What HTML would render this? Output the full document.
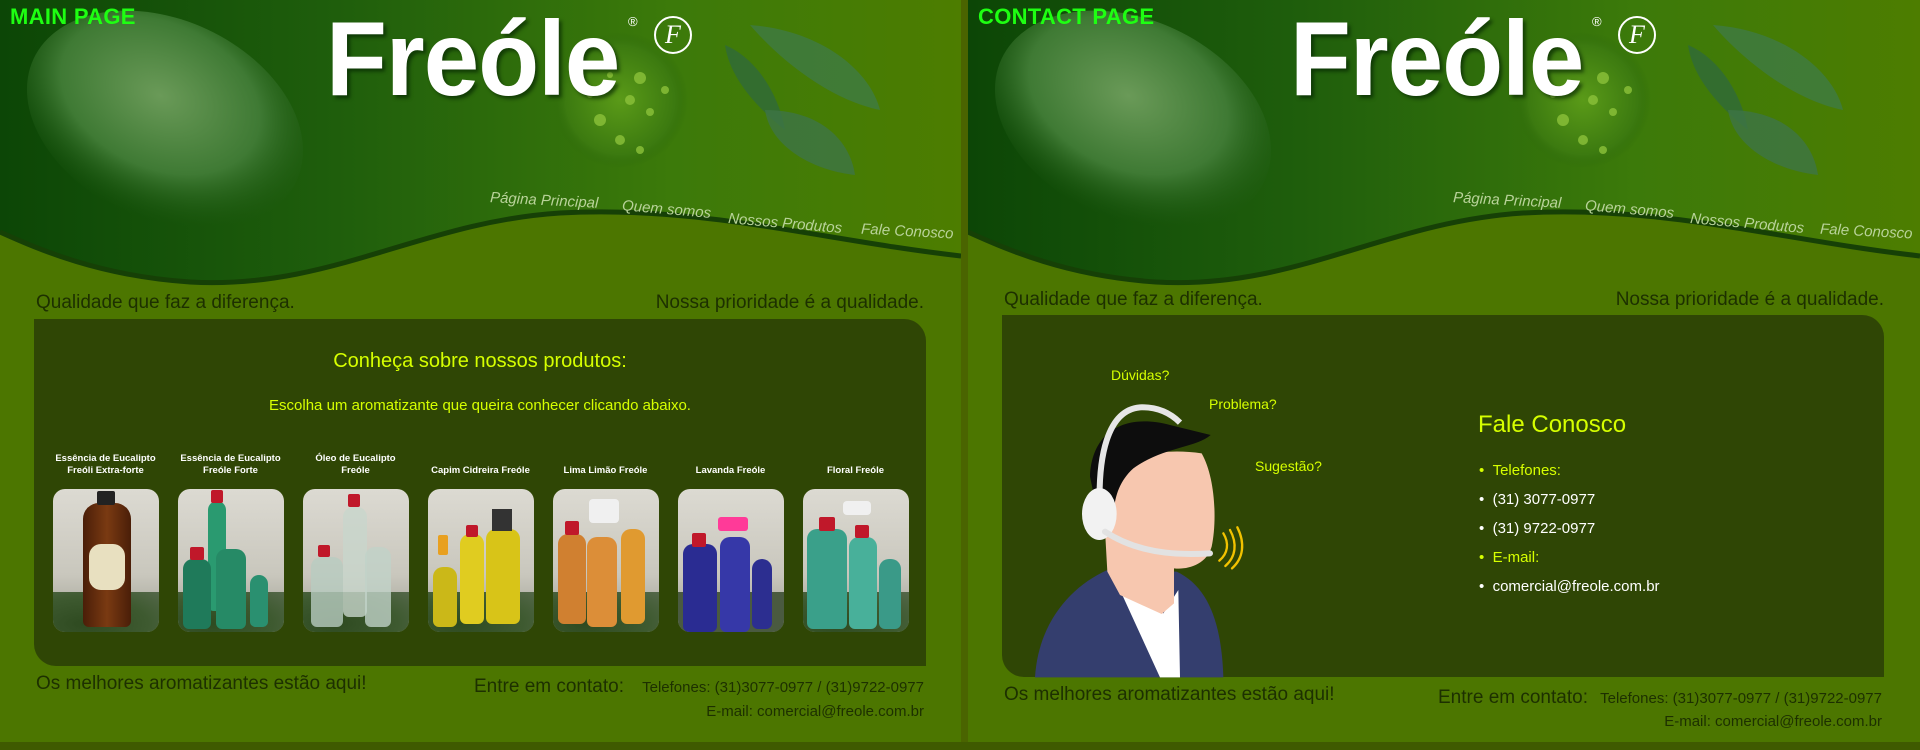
<!DOCTYPE html>
<html><head><meta charset="utf-8"><style>
*{margin:0;padding:0;box-sizing:border-box}
body{width:1920px;height:750px;background:#4f6e00;overflow:hidden;font-family:"Liberation Sans",Arial,sans-serif;position:relative}
.panel{position:absolute;top:0;height:742px;background:#4c7600;overflow:hidden}
.sep{position:absolute;left:961px;top:0;width:7px;height:750px;background:#4a6400}
.bottom{position:absolute;left:0;top:742px;width:1920px;height:8px;background:#3f5a00}
.abs{position:absolute;white-space:nowrap}
.tag{position:absolute;left:10px;top:4px;color:#1eff12;font-weight:bold;font-size:22px;letter-spacing:0.3px;z-index:5}
.logo{position:absolute;left:326px;top:-1px;color:#fff;font-weight:bold;font-size:106px;transform:scaleX(0.94);transform-origin:left top;text-shadow:3px 3px 4px rgba(0,30,0,.6);letter-spacing:-1px;z-index:4}
.reg{position:absolute;left:628px;top:14px;color:#fff;font-size:13px;z-index:4}
.fc{position:absolute;left:654px;top:16px;width:38px;height:38px;border:2px solid #fff;border-radius:50%;color:#fff;font-family:"Liberation Serif",serif;font-style:italic;font-size:26px;text-align:center;line-height:34px;z-index:4}
.nav{position:absolute;color:#b9d39a;font-style:italic;font-size:15px;z-index:4;white-space:nowrap}
.dark{color:#1d3000}
.box{position:absolute;background:#2f4605;border-radius:0 22px 0 22px}
.lbl{position:absolute;width:125px;text-align:center;color:#fff;font-weight:bold;font-size:9.5px;line-height:12px}
.img{position:absolute;width:106px;height:143px;border-radius:12px;overflow:hidden;background:linear-gradient(#dcdad2,#c9c7bd 60%,#9a9c90)}
.leaf{position:absolute;left:0;bottom:0;width:106px;height:40px;background:radial-gradient(ellipse at 30% 80%,#2e4a20,#3e5a30 60%,#55684a)}
.b{position:absolute;border-radius:10px 10px 6px 6px}
.cap{position:absolute;background:#c0182a;border-radius:2px}
.y{color:#d6ff00}
ul{list-style:none}
</style></head><body>

<!-- LEFT PANEL -->
<div class="panel" style="left:0;width:961px">
  <svg class="abs" style="left:0;top:0" width="961" height="300">
    <defs>
      <linearGradient id="hg" x1="0" x2="1" y1="0" y2="0">
        <stop offset="0" stop-color="#0c4606"/><stop offset="0.35" stop-color="#1f5e0c"/><stop offset="0.7" stop-color="#3c7a0a"/><stop offset="1" stop-color="#4d7d00"/>
      </linearGradient>
      <radialGradient id="lf" cx="0.45" cy="0.4" r="0.6"><stop offset="0" stop-color="#6a9a58"/><stop offset="0.6" stop-color="#3f7a34"/><stop offset="1" stop-color="#1f5a14" stop-opacity="0"/></radialGradient>
      <radialGradient id="dr" cx="0.5" cy="0.5" r="0.5"><stop offset="0" stop-color="#5a9a18"/><stop offset="0.8" stop-color="#3c7a10"/><stop offset="1" stop-color="#2e6a0a" stop-opacity="0"/></radialGradient>
    </defs>
    <path d="M0 0H961V256C820 240 700 205 560 213C420 222 330 290 190 282C100 276 40 250 0 232Z" fill="url(#hg)"/>
    <ellipse cx="165" cy="120" rx="145" ry="100" fill="url(#lf)" transform="rotate(25 165 120)"/>
    <circle cx="620" cy="100" r="68" fill="url(#dr)"/>
    <g fill="#8cc23a" opacity=".8"><circle cx="640" cy="78" r="6"/><circle cx="630" cy="100" r="5"/><circle cx="600" cy="120" r="6"/><circle cx="650" cy="112" r="4"/><circle cx="620" cy="140" r="5"/><circle cx="590" cy="95" r="3"/><circle cx="665" cy="90" r="4"/><circle cx="610" cy="75" r="3"/><circle cx="640" cy="150" r="4"/></g>
    <path d="M750 25C820 30 870 70 880 110C830 100 780 60 750 25Z" fill="#3f7a44" opacity=".8"/>
    <path d="M725 45C760 60 780 100 785 130C760 110 730 80 725 45Z" fill="#2f6a3a" opacity=".8"/>
    <path d="M765 110C820 110 850 140 855 175C810 170 770 145 765 110Z" fill="#3d7446" opacity=".8"/>
    <path d="M0 232C40 250 100 276 190 282C330 290 420 222 560 213C700 205 820 240 961 256" fill="none" stroke="#164006" stroke-width="5"/>
  </svg>
  <div class="tag">MAIN PAGE</div>
  <div class="logo">Freóle</div>
  <div class="reg">®</div>
  <div class="fc">F</div>
  <div class="nav" style="left:490px;top:192px;transform:rotate(3deg)">Página Principal</div>
  <div class="nav" style="left:622px;top:201px;transform:rotate(5deg)">Quem somos</div>
  <div class="nav" style="left:728px;top:215px;transform:rotate(5deg)">Nossos Produtos</div>
  <div class="nav" style="left:861px;top:223px;transform:rotate(3deg)">Fale Conosco</div>

  <div class="abs dark" style="left:36px;top:292px;font-size:19px">Qualidade que faz a diferença.</div>
  <div class="abs dark" style="right:37px;top:292px;font-size:19px">Nossa prioridade é a qualidade.</div>

  <div class="box" style="left:34px;top:319px;width:892px;height:347px"></div>
  <div class="abs y" style="left:34px;width:892px;top:350px;text-align:center;font-size:20px">Conheça sobre nossos produtos:</div>
  <div class="abs y" style="left:34px;width:892px;top:397px;text-align:center;font-size:15px">Escolha um aromatizante que queira conhecer clicando abaixo.</div>

  <div class="lbl" style="left:43px;top:453px">Essência de Eucalipto<br>Freóli Extra-forte</div>
  <div class="lbl" style="left:168px;top:453px">Essência de Eucalipto<br>Freóle Forte</div>
  <div class="lbl" style="left:293px;top:453px">Óleo de Eucalipto<br>Freóle</div>
  <div class="lbl" style="left:418px;top:465px">Capim Cidreira Freóle</div>
  <div class="lbl" style="left:543px;top:465px">Lima Limão Freóle</div>
  <div class="lbl" style="left:668px;top:465px">Lavanda Freóle</div>
  <div class="lbl" style="left:793px;top:465px">Floral Freóle</div>

  <div class="img" style="left:53px;top:489px"><div class="leaf"></div>
    <div class="b" style="left:30px;top:14px;width:48px;height:124px;background:linear-gradient(90deg,#4a1e08,#7a3a12,#4a1e08);border-radius:16px 16px 6px 6px"></div>
    <div class="cap" style="left:44px;top:2px;width:18px;height:14px;background:#222"></div>
    <div class="abs" style="left:36px;top:55px;width:36px;height:46px;background:#e8e0c0;border-radius:12px"></div></div>
  <div class="img" style="left:178px;top:489px"><div class="leaf"></div>
    <div class="b" style="left:30px;top:12px;width:18px;height:110px;background:#2a9a70"></div><div class="cap" style="left:33px;top:1px;width:12px;height:13px"></div>
    <div class="b" style="left:5px;top:70px;width:28px;height:70px;background:#1f7a5a"></div><div class="cap" style="left:12px;top:58px;width:14px;height:13px"></div>
    <div class="b" style="left:38px;top:60px;width:30px;height:80px;background:#268a66"></div>
    <div class="b" style="left:72px;top:86px;width:18px;height:52px;background:#2a9070"></div></div>
  <div class="img" style="left:303px;top:489px"><div class="leaf"></div>
    <div class="b" style="left:40px;top:18px;width:24px;height:110px;background:#c8d6cc;opacity:.8"></div><div class="cap" style="left:45px;top:5px;width:12px;height:13px"></div>
    <div class="b" style="left:8px;top:68px;width:32px;height:70px;background:#b8ccc0;opacity:.8"></div><div class="cap" style="left:15px;top:56px;width:12px;height:12px"></div>
    <div class="b" style="left:62px;top:58px;width:26px;height:80px;background:#c0d2c8;opacity:.8"></div></div>
  <div class="img" style="left:428px;top:489px"><div class="leaf"></div>
    <div class="b" style="left:58px;top:40px;width:34px;height:95px;background:#d8c418"></div><div class="abs" style="left:64px;top:20px;width:20px;height:22px;background:#333"></div>
    <div class="b" style="left:32px;top:45px;width:24px;height:90px;background:#e0cc20"></div><div class="cap" style="left:38px;top:36px;width:12px;height:12px"></div>
    <div class="b" style="left:5px;top:78px;width:24px;height:60px;background:#cbb818"></div><div class="cap" style="left:10px;top:46px;width:10px;height:20px;background:#e8a020"></div></div>
  <div class="img" style="left:553px;top:489px"><div class="leaf"></div>
    <div class="b" style="left:5px;top:45px;width:28px;height:90px;background:#d08030"></div><div class="cap" style="left:12px;top:32px;width:14px;height:14px"></div>
    <div class="b" style="left:34px;top:48px;width:30px;height:90px;background:#dc8e38"></div><div class="abs" style="left:36px;top:10px;width:30px;height:24px;background:#f0f0f0;border-radius:4px"></div>
    <div class="b" style="left:68px;top:40px;width:24px;height:95px;background:#e09a30"></div></div>
  <div class="img" style="left:678px;top:489px"><div class="leaf" style="background:#4a5a40"></div>
    <div class="b" style="left:5px;top:55px;width:34px;height:88px;background:#2a2c92"></div><div class="cap" style="left:14px;top:44px;width:14px;height:14px"></div>
    <div class="b" style="left:42px;top:48px;width:30px;height:95px;background:#3638a8"></div><div class="abs" style="left:40px;top:28px;width:30px;height:14px;background:#ff3a98;border-radius:3px"></div>
    <div class="b" style="left:74px;top:70px;width:20px;height:70px;background:#2c2e90"></div></div>
  <div class="img" style="left:803px;top:489px"><div class="leaf"></div>
    <div class="b" style="left:4px;top:40px;width:40px;height:100px;background:#3aa08a"></div><div class="cap" style="left:16px;top:28px;width:16px;height:14px"></div>
    <div class="b" style="left:46px;top:48px;width:28px;height:92px;background:#48b09a"></div><div class="cap" style="left:52px;top:36px;width:14px;height:13px"></div>
    <div class="b" style="left:76px;top:70px;width:22px;height:70px;background:#3a9a88"></div><div class="abs" style="left:40px;top:12px;width:28px;height:14px;background:#f0f0f0;border-radius:4px"></div></div>

  <div class="abs dark" style="left:36px;top:673px;font-size:19px">Os melhores aromatizantes estão aqui!</div>
  <div class="abs dark" style="left:474px;top:676px;font-size:19px">Entre em contato:</div>
  <div class="abs dark" style="right:37px;top:679px;font-size:15px">Telefones: (31)3077-0977 / (31)9722-0977</div>
  <div class="abs dark" style="right:37px;top:703px;font-size:15px">E-mail: comercial@freole.com.br</div>
</div>

<div class="sep"></div>

<!-- RIGHT PANEL -->
<div class="panel" style="left:968px;width:952px">
  <svg class="abs" style="left:0;top:0" width="952" height="300">
    <defs>
      <linearGradient id="hg2" x1="0" x2="1" y1="0" y2="0">
        <stop offset="0" stop-color="#0c4606"/><stop offset="0.35" stop-color="#1f5e0c"/><stop offset="0.7" stop-color="#3c7a0a"/><stop offset="1" stop-color="#4d7d00"/>
      </linearGradient>
      <radialGradient id="lf2" cx="0.45" cy="0.4" r="0.6"><stop offset="0" stop-color="#6a9a58"/><stop offset="0.6" stop-color="#3f7a34"/><stop offset="1" stop-color="#1f5a14" stop-opacity="0"/></radialGradient>
      <radialGradient id="dr2" cx="0.5" cy="0.5" r="0.5"><stop offset="0" stop-color="#5a9a18"/><stop offset="0.8" stop-color="#3c7a10"/><stop offset="1" stop-color="#2e6a0a" stop-opacity="0"/></radialGradient>
    </defs>
    <path d="M0 0H952V256C812 240 693 205 555 213C416 222 327 290 188 282C99 276 40 250 0 232Z" fill="url(#hg2)"/>
    <ellipse cx="165" cy="120" rx="145" ry="100" fill="url(#lf2)" transform="rotate(25 165 120)"/>
    <circle cx="615" cy="100" r="68" fill="url(#dr2)"/>
    <g fill="#8cc23a" opacity=".8"><circle cx="635" cy="78" r="6"/><circle cx="625" cy="100" r="5"/><circle cx="595" cy="120" r="6"/><circle cx="645" cy="112" r="4"/><circle cx="615" cy="140" r="5"/><circle cx="585" cy="95" r="3"/><circle cx="660" cy="90" r="4"/><circle cx="635" cy="150" r="4"/></g>
    <path d="M745 25C815 30 865 70 875 110C825 100 775 60 745 25Z" fill="#3f7a44" opacity=".8"/>
    <path d="M720 45C755 60 775 100 780 130C755 110 725 80 720 45Z" fill="#2f6a3a" opacity=".8"/>
    <path d="M760 110C815 110 845 140 850 175C805 170 765 145 760 110Z" fill="#3d7446" opacity=".8"/>
    <path d="M0 232C40 250 99 276 188 282C327 290 416 222 555 213C693 205 812 240 952 256" fill="none" stroke="#164006" stroke-width="5"/>
  </svg>
  <div class="tag">CONTACT PAGE</div>
  <div class="logo" style="left:322px">Freóle</div>
  <div class="reg" style="left:624px">®</div>
  <div class="fc" style="left:650px">F</div>
  <div class="nav" style="left:485px;top:192px;transform:rotate(3deg)">Página Principal</div>
  <div class="nav" style="left:617px;top:201px;transform:rotate(5deg)">Quem somos</div>
  <div class="nav" style="left:722px;top:215px;transform:rotate(5deg)">Nossos Produtos</div>
  <div class="nav" style="left:852px;top:223px;transform:rotate(3deg)">Fale Conosco</div>

  <div class="abs dark" style="left:36px;top:289px;font-size:19px">Qualidade que faz a diferença.</div>
  <div class="abs dark" style="right:36px;top:289px;font-size:19px">Nossa prioridade é a qualidade.</div>

  <div class="box" style="left:34px;top:315px;width:882px;height:362px"></div>

  <div class="abs y" style="left:143px;top:367px;font-size:14px">Dúvidas?</div>
  <div class="abs y" style="left:241px;top:396px;font-size:14px">Problema?</div>
  <div class="abs y" style="left:287px;top:458px;font-size:14px">Sugestão?</div>

  <svg class="abs" style="left:52px;top:390px" width="260" height="290" viewBox="0 0 780 870">
    <path d="M45 862C55 700 150 590 262 540L470 545C565 590 605 700 610 862Z" fill="#343e6e"/>
    <path d="M300 600L430 670L475 600L480 862L420 862Z" fill="#fff"/>
    <path d="M280 250C330 190 440 175 545 190C585 260 592 390 575 470C560 525 500 540 462 535L462 640L425 672L300 615L262 545L255 420Z" fill="#f7c7af"/>
    <path d="M210 260C215 120 320 70 450 105L572 135C525 175 430 170 340 235C295 275 282 330 282 370L232 365Z" fill="#0d0d0d"/>
    <path d="M240 370C232 200 262 60 360 52C425 50 462 80 480 98" fill="none" stroke="#e6e6e6" stroke-width="18"/>
    <ellipse cx="238" cy="372" rx="52" ry="78" fill="#f2f2f2"/>
    <path d="M255 425C330 475 430 500 570 490" fill="none" stroke="#e2e2e2" stroke-width="18" stroke-linecap="round"/>
    <g fill="none" stroke="#f2c200" stroke-width="7" stroke-linecap="round"><path d="M610 430C628 460 624 490 598 512"/><path d="M630 420C652 460 648 500 616 528"/><path d="M652 412C676 460 670 505 636 535"/></g>
  </svg>

  <div class="abs y" style="left:510px;top:411px;font-size:24px">Fale Conosco</div>
  <ul class="abs" style="left:511px;top:456px;font-size:15px;line-height:29px">
    <li class="y">•&nbsp;&nbsp;Telefones:</li>
    <li style="color:#fff">•&nbsp;&nbsp;(31) 3077-0977</li>
    <li style="color:#fff">•&nbsp;&nbsp;(31) 9722-0977</li>
    <li class="y">•&nbsp;&nbsp;E-mail:</li>
    <li style="color:#fff">•&nbsp;&nbsp;comercial@freole.com.br</li>
  </ul>

  <div class="abs dark" style="left:36px;top:684px;font-size:19px">Os melhores aromatizantes estão aqui!</div>
  <div class="abs dark" style="left:470px;top:687px;font-size:19px">Entre em contato:</div>
  <div class="abs dark" style="right:38px;top:690px;font-size:15px">Telefones: (31)3077-0977 / (31)9722-0977</div>
  <div class="abs dark" style="right:38px;top:713px;font-size:15px">E-mail: comercial@freole.com.br</div>
</div>

<div class="bottom"></div>
</body></html>
